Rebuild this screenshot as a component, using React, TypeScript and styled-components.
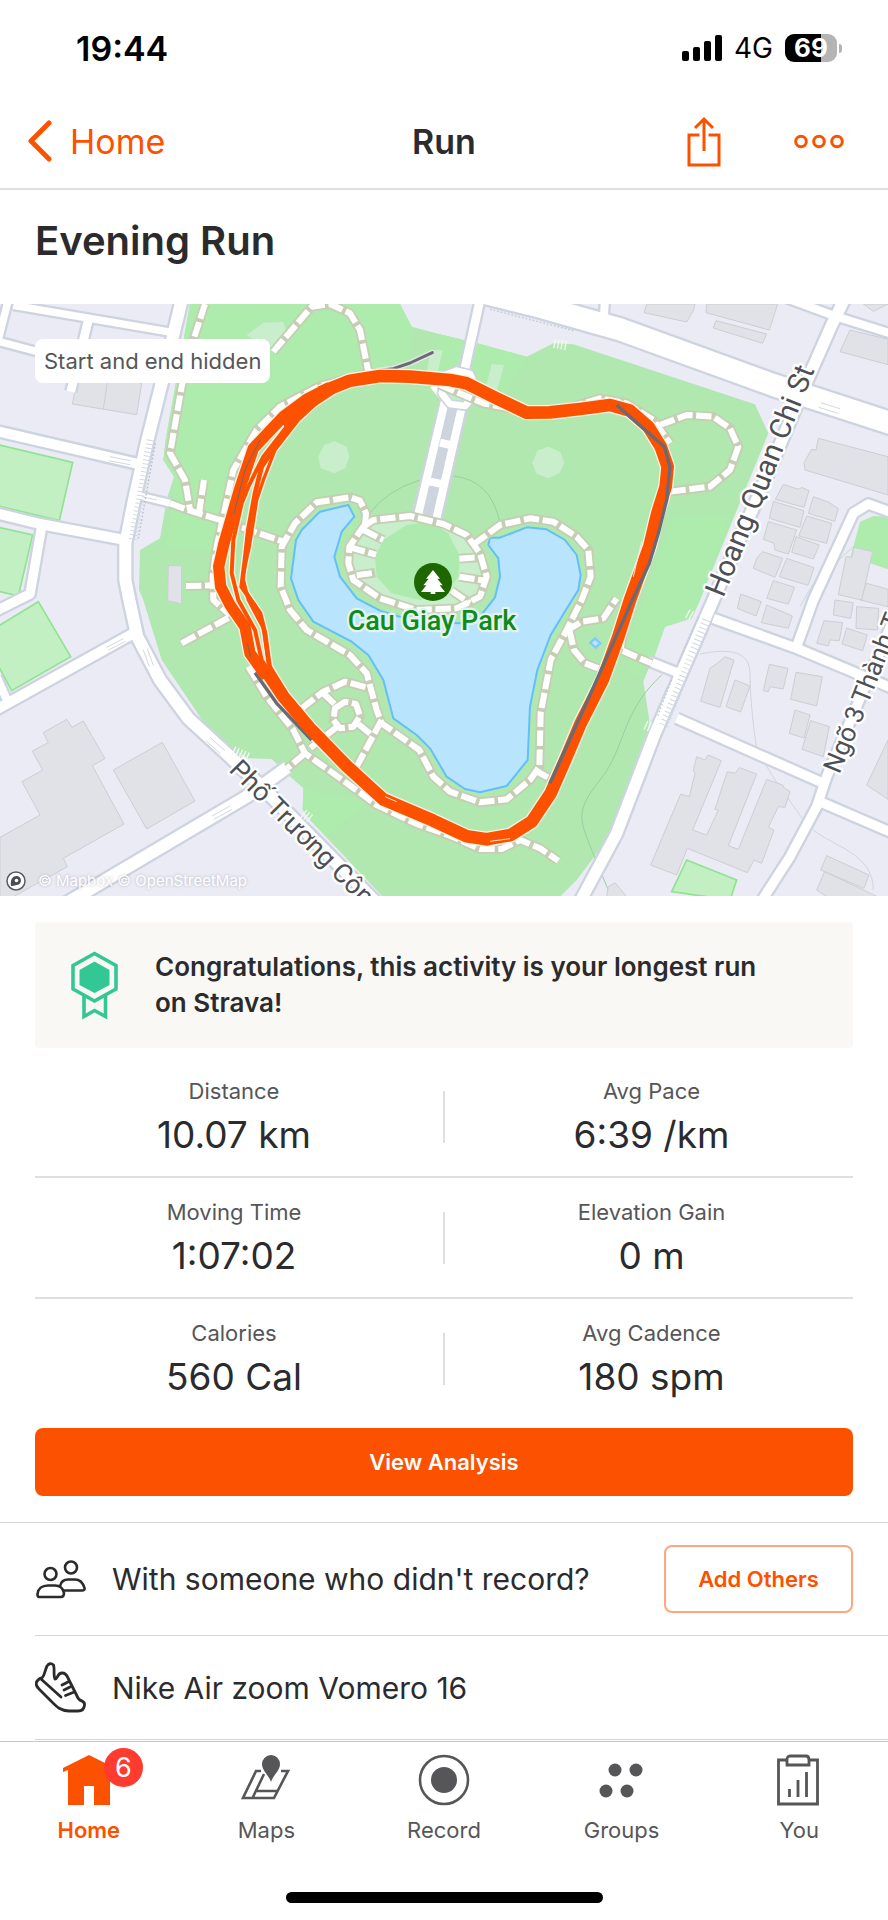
import React from "react";
import styled, { createGlobalStyle } from "styled-components";

const GlobalStyle = createGlobalStyle`
  * { box-sizing: border-box; }
  body { margin: 0; background: #fff; }
  button { font: inherit; cursor: pointer; }
  h1, h2, p, dl, dt, dd { margin: 0; font-weight: inherit; }
`;

const ORANGE = "#fc5200";
const INK = "#2b2b2d";
const SLATE = "#565658";
const RULE = "#dfdfe3";

const Screen = styled.div`
  min-height: 100vh;
  display: flex;
  flex-direction: column;
  background: #fff;
  color: ${INK};
  font-family: Inter, "Liberation Sans", sans-serif;
`;

const StatusBar = styled.div`
  display: flex;
  align-items: center;
  justify-content: space-between;
  height: 96px;
  padding: 0 46px 0 76px;
  color: #000;
`;

const Clock = styled.time`
  font-size: 34px;
  font-weight: 600;
`;

const StatusGroup = styled.div`
  display: flex;
  align-items: center;
  gap: 12px;
  font-size: 28px;
`;

const Battery = styled.div`
  display: flex;
  align-items: center;
  gap: 2px;
  &::after {
    content: "";
    width: 3px;
    height: 9px;
    border-radius: 0 3px 3px 0;
    background: #b4b4b4;
  }
`;

const BatteryLevel = styled.span`
  width: 52px;
  height: 28px;
  border-radius: 9px;
  background: linear-gradient(90deg, #000 69%, #b4b4b4 69%);
  color: #fff;
  font-size: 26px;
  font-weight: 700;
  line-height: 28px;
  text-align: center;
`;

const NavBar = styled.header`
  display: grid;
  grid-template-columns: 1fr auto 1fr;
  align-items: center;
  height: 94px;
  padding-bottom: 2px;
  border-bottom: 2px solid ${RULE};
  font-size: 34px;
`;

const BackLink = styled.a`
  display: flex;
  align-items: center;
  gap: 16px;
  padding-left: 28px;
  color: ${ORANGE};
  text-decoration: none;
`;

const NavTitle = styled.h2`
  font-size: 34px;
  font-weight: 600;
`;

const NavActions = styled.div`
  display: flex;
  align-items: center;
  justify-content: flex-end;
  gap: 72px;
  padding-right: 43px;
`;

const IconButton = styled.button`
  display: flex;
  padding: 0;
  border: 0;
  background: none;
  color: ${ORANGE};
`;

const ActivityTitle = styled.h1`
  padding: 26px 35px 38px;
  font-size: 40px;
  line-height: 50px;
  font-weight: 600;
`;

const MapFrame = styled.section`
  position: relative;
`;

const MapDrawing = styled.svg`
  display: block;
  width: 100%;
  height: auto;
`;

const HiddenBadge = styled.span`
  position: absolute;
  top: 35px;
  left: 35px;
  padding: 0 9px;
  border-radius: 8px;
  background: #fff;
  color: ${SLATE};
  font-size: 22px;
  line-height: 44px;
`;

const Attribution = styled.span`
  position: absolute;
  left: 6px;
  bottom: 4px;
  display: flex;
  align-items: center;
  gap: 12px;
  color: #fff;
  font-size: 15px;
  line-height: 22px;
  text-shadow: 0 0 3px rgba(90, 90, 110, 0.4);
`;

const Main = styled.main`
  padding: 26px 35px;
`;

const Congrats = styled.section`
  display: flex;
  align-items: center;
  gap: 36px;
  min-height: 126px;
  margin-bottom: 9px;
  padding: 0 72px 0 36px;
  border-radius: 4px;
  background: #f9f8f4;
  font-size: 26px;
  line-height: 36px;
  font-weight: 600;
`;

const StatRow = styled.dl`
  display: grid;
  grid-template-columns: 1fr 2px 1fr;
  height: 121px;
  border-bottom: 2px solid ${RULE};
  text-align: center;
  &:last-of-type { border-bottom-color: transparent; }
`;

const StatDivider = styled.span`
  height: 52px;
  margin-top: 34px;
  background: #dfdfdf;
`;

const StatLabel = styled.dt`
  color: ${SLATE};
  font-size: 22px;
  line-height: 34px;
`;

const StatValue = styled.dd`
  font-size: 37px;
  line-height: 54px;
`;

const StatCell = styled.div`
  padding-top: 17px;
  &:first-child { padding-right: 10px; }
  &:last-child { padding-left: 5px; }
`;

const PrimaryButton = styled.button`
  display: block;
  width: 100%;
  height: 68px;
  margin-top: 8px;
  border: 0;
  border-radius: 8px;
  background: ${ORANGE};
  color: #fff;
  font-size: 22px;
  font-weight: 600;
`;

const DetailList = styled.section`
  padding-bottom: 1px;
  border-top: 1px solid #d6d6d9;
`;

const DetailRow = styled.div<{ $height: number }>`
  display: flex;
  align-items: center;
  gap: 26px;
  height: ${(p) => p.$height}px;
  margin-left: 35px;
  padding-right: 35px;
  border-bottom: 1px solid #d6d6d9;
`;

const DetailText = styled.p`
  flex: 1;
  font-size: 30px;
`;

const OutlineButton = styled.button`
  width: 189px;
  height: 68px;
  border: 2px solid #ffa580;
  border-radius: 8px;
  background: #fff;
  color: ${ORANGE};
  font-size: 22px;
  font-weight: 600;
`;

const TabBar = styled.nav`
  display: grid;
  grid-template-columns: repeat(5, 1fr);
  border-top: 1px solid #c6c6c8;
  padding-top: 12px;
`;

const Tab = styled.a<{ $active?: boolean }>`
  display: flex;
  flex-direction: column;
  align-items: center;
  gap: 9px;
  color: ${(p) => (p.$active ? ORANGE : SLATE)};
  font-size: 22px;
  line-height: 30px;
  font-weight: ${(p) => (p.$active ? 600 : 400)};
  text-decoration: none;
`;

const TabIcon = styled.span`
  position: relative;
  display: flex;
`;

const Badge = styled.span`
  position: absolute;
  top: -6px;
  left: 41px;
  width: 39px;
  height: 39px;
  border-radius: 50%;
  background: #ff3b30;
  color: #fff;
  font-size: 27px;
  font-weight: 400;
  line-height: 39px;
  text-align: center;
`;

const HomeIndicator = styled.div`
  width: 317px;
  height: 11px;
  margin: auto auto 17px;
  border-radius: 6px;
  background: #000;
`;

const roads: { d: string; w: number }[] = [
  { d: "M25 0L-8 130", w: 22 },
  { d: "M40 16L520 98", w: 22 },
  { d: "M0 125L130 160", w: 22 },
  { d: "M265 60L212 275", w: 26 },
  { d: "M-10 393L415 492", w: 30 },
  { d: "M-10 640L120 672L385 722", w: 30 },
  { d: "M125 680L90 882L-10 932", w: 28 },
  { d: "M-10 1130L25 1210", w: 24 },
  { d: "M-10 1228L400 1000", w: 30 },
  { d: "M190 1815L740 1490L862 1402", w: 36 },
  { d: "M420 588L510 610", w: 20 },
  { d: "M1942 1082L2050 1125", w: 26 },
  { d: "M1815 -10L1812 50", w: 24 },
  { d: "M1440 0L1388 235", w: 26 },
  { d: "M545 0L485 250L440 430L402 600L376 730L376 840L388 900L412 1010L480 1140L565 1255L690 1370L800 1475L1130 1810", w: 36 },
  { d: "M1420 -30L1620 20L1860 88L2320 255L2680 372", w: 66 },
  { d: "M2360 -5L2510 50L2680 103", w: 24 },
  { d: "M2532 0L2495 75L2400 290L2300 530L2140 900L1965 1300L1850 1600L1740 1805", w: 34 },
  { d: "M2680 640L2605 612L2560 640L2440 900L2390 1040", w: 28 },
  { d: "M2140 955L2390 1045L2680 1166", w: 28 },
  { d: "M2030 1255L2470 1450", w: 28 },
  { d: "M2680 960L2480 1430L2450 1520L2370 1670L2280 1810", w: 28 },
  { d: "M2460 1505L2680 1600", w: 28 },
];

const buildings = [
  "M238 205L425 250L410 344L217 312Z",
  "M0 1612L120 1545L66 1445L128 1410L97 1353L145 1328L130 1298L200 1258L216 1282L250 1263L315 1376L277 1397L372 1572L190 1675L202 1700L40 1790L0 1790Z",
  "M340 1410L487 1327L585 1503L440 1587Z",
  "M505 797L545 797L545 912L503 902Z",
  "M1940 12L2085 12L2080 32L2060 66L1932 38Z",
  "M2120 12L2333 12L2308 90L2118 38Z",
  "M2148 62L2300 102L2288 130L2140 84Z",
  "M2590 12L2620 34L2664 12Z",
  "M2550 90L2664 118L2664 194L2520 155Z",
  "M2455 415L2664 470L2664 585L2415 510L2412 488L2435 448L2448 450Z",
  "M2350 553L2395 568L2405 562L2427 572L2412 622L2326 598Z",
  "M2320 604L2412 632L2400 682L2308 655Z",
  "M2305 665L2390 690L2365 762L2325 750L2322 730L2290 718Z",
  "M2440 590L2485 606L2515 626L2504 664L2425 640Z",
  "M2420 648L2495 670L2480 730L2396 708Z",
  "M2388 710L2458 735L2440 777L2375 757Z",
  "M2288 755L2348 775L2325 832L2260 805L2270 775Z",
  "M2360 775L2442 803L2424 856L2338 830Z",
  "M2320 842L2384 862L2365 912L2300 895Z",
  "M2600 850L2664 868L2664 920L2580 900Z",
  "M2222 882L2284 905L2268 948L2212 925Z",
  "M2300 915L2377 948L2365 985L2284 968Z",
  "M2505 900L2560 908L2552 955L2500 945Z",
  "M2570 920L2636 925L2632 990L2568 985Z",
  "M2472 962L2528 968L2518 1022L2490 1020L2485 1038L2450 1030Z",
  "M2540 984L2602 1005L2588 1052L2526 1032Z",
  "M2152 1090L2175 1070L2202 1080L2160 1222L2102 1204L2130 1105Z",
  "M2205 1140L2250 1158L2222 1236L2178 1220Z",
  "M2308 1093L2364 1105L2350 1167L2310 1160L2305 1175L2290 1172Z",
  "M2388 1117L2467 1130L2450 1218L2372 1198Z",
  "M2385 1230L2430 1245L2412 1314L2368 1300Z",
  "M2432 1262L2488 1280L2470 1370L2406 1348Z",
  "M2080 1410L2090 1370L2115 1380L2125 1365L2164 1382L2078 1590L2120 1605L2155 1530L2145 1528L2170 1450L2182 1415L2205 1420L2218 1403L2270 1422L2185 1637L2215 1648L2300 1438L2348 1455L2350 1462L2370 1475L2355 1522L2335 1520L2305 1582L2322 1590L2285 1690L2262 1680L2242 1718L2062 1645L2030 1725L1952 1695L2042 1482L2068 1490L2085 1420Z",
  "M2480 1667L2607 1725L2592 1765L2462 1710Z",
  "M2474 1715L2632 1790L2480 1790L2450 1770Z",
  "M2664 1320L2600 1455L2664 1498Z",
  "M1845 1748L1880 1790L1820 1790L1825 1760Z",
];

const paths = [
  "M615 12L580 120L545 260L510 460L555 540L570 630",
  "M612 540L597 640",
  "M510 610L570 632L660 660L850 725",
  "M820 155L935 20L990 12L1050 40L1080 90L1105 215",
  "M1120 215L960 258L840 320L770 390L700 510L672 640L650 740L638 830L640 900L690 945",
  "M558 858L640 856",
  "M545 1030L695 948",
  "M1095 675L1098 640L1080 602L1050 592L950 607L885 670L845 740L842 860L870 930L920 990L1050 1065L1100 1120L1130 1230L1145 1270L1258 1350L1300 1430L1350 1475L1440 1507L1520 1498L1590 1440L1618 1400L1622 1240L1652 1080L1700 990L1745 900L1772 830L1765 750L1730 710L1660 665L1590 655L1500 675L1425 730",
  "M1090 680L1120 660L1230 648L1330 672L1400 705L1440 760L1460 830L1440 890L1370 925L1250 930L1140 895L1060 840L1045 790L1048 740Z",
  "M1090 690L1150 720", "M1050 742L1128 764", "M1070 826L1125 818",
  "M1378 776L1435 772", "M1378 830L1455 842", "M1355 872L1410 910",
  "M905 1225L970 1175L1035 1145L1110 1165", "M970 1180L1012 1220",
  "M1075 1272L1115 1305", "M1012 1280L930 1345", "M1145 1260L1070 1400",
  "M1005 1225L1035 1205L1068 1212L1080 1248L1060 1280L1020 1285L1000 1260Z",
  "M745 1100L800 1190L880 1290L915 1360L1000 1420L1130 1515L1250 1572L1350 1607L1440 1647L1505 1647L1560 1620L1620 1645L1675 1682",
  "M915 1360L862 1405",
  "M1320 255L1450 310L1580 335L1700 325L1800 295L1880 310L1960 360L2010 430",
  "M1980 375L2060 345L2140 350L2190 385L2215 440L2190 510L2130 560L2010 575",
  "M1700 992L1745 965L1810 955L1850 895",
  "M1708 990L1722 1050L1755 1090L1795 1105",
  "M1868 1000L1862 1050L1955 1090",
  "M1603 1410L1655 1438",
];

const water =
  "M1045 615L1063 650L1025 695L1003 770L1020 830L1070 895L1140 932L1250 966L1380 970L1440 950L1485 892L1500 830L1495 775L1465 735L1470 713L1500 713L1580 682L1640 688L1695 720L1730 765L1742 825L1735 870L1710 910L1652 1005L1612 1110L1590 1220L1583 1380L1520 1458L1440 1477L1395 1467L1340 1430L1290 1345L1250 1305L1180 1255L1150 1140L1105 1065L1055 1025L940 965L895 900L873 835L888 720L905 690L960 635Z";

const loop =
  "M960 278L1050 242L1140 228L1230 230L1350 240L1400 250L1490 295L1580 338L1650 337L1740 327L1830 315L1890 332L1945 380L1982 440L2003 500L1997 560L1972 640L1948 740L1890 900L1855 1010L1808 1140L1742 1270L1700 1370L1652 1480L1595 1565L1532 1605L1460 1618L1400 1609L1300 1562L1150 1498L1040 1398L930 1285L850 1190L790 1100";

const laps = [
  { d: "M990 262L920 298L850 350L760 445L718 570L692 660L672 730L656 800L662 860L690 915L735 980L750 1060L800 1130", w: 34 },
  { d: "M970 280L860 380L790 470L745 560L725 610L700 720L695 820L715 900L765 990L785 1080L830 1150", w: 12 },
  { d: "M990 268L910 330L840 420L785 500L765 580L745 690L735 780L725 860L780 940L795 1000L810 1110L870 1200", w: 14 },
  { d: "M985 276L895 360L825 450L790 540L770 600L748 740L728 830L745 900L790 985L805 1090L860 1180", w: 10 },
  { d: "M1000 262L920 315L850 375", w: 36 },
];

function RouteMap() {
  return (
    <MapDrawing viewBox="0 12 2664 1776" role="img" aria-label="Route around Cau Giay Park">
      <rect y="12" width="2664" height="1776" fill="#ebebf5" />
      <path
        fill="#b0e8b0"
        d="M570 12L1200 12L1235 80L1320 103L1440 132L1580 170L1660 130L1720 133L2265 313L2305 400L2100 900L2075 955L1995 980L1930 1145L1948 1260L1945 1290L1825 1615L1730 1740L1680 1790L1148 1790L930 1560L908 1530L910 1465L865 1425L815 1377L745 1375L700 1350L610 1265L485 1080L430 900L417 870L420 750L480 715L500 600L522 530L490 480L497 420Z"
      />
      <g fill="#adecad">
        <path d="M570 12L1200 12L1235 80L1225 215L1050 240L860 330L720 520L680 740L600 750L500 740L522 530L490 480L497 420Z" />
        <path d="M2020 650L2190 640L2100 900L2075 955L1995 980L1960 1080L1890 1140L1880 1040Z" />
        <path d="M910 1465L1100 1510L980 1610L908 1530Z" />
        <path d="M1320 103L1440 132L1580 170L1500 300L1300 240Z" />
      </g>
      <g fill="#c9eecb">
        <path d="M740 105L790 68L850 66L858 90L820 155Z" />
        <path d="M955 470L972 436L1003 424L1040 440L1048 470L1036 504L1004 520L962 505Z" />
        <path d="M1597 490L1612 452L1645 440L1681 456L1693 490L1678 520L1645 535L1610 522Z" />
        <path d="M1475 192L1512 196L1490 275L1457 265Z" />
        <path d="M1292 150L1328 150L1310 230L1280 220Z" />
      </g>
      <g fill="none" stroke="#98cfa3" strokeWidth="3">
        <path d="M1105 645Q1160 570 1260 540M1360 528Q1470 540 1498 660M1985 1125C1860 1240 1880 1340 1800 1440S1740 1560 1785 1675L1825 1770" />
      </g>
      <g fill="none" stroke="#cfd6dc" strokeWidth="3">
        <path d="M2100 1062Q2250 1030 2250 1120T2270 1350L2325 1440L2410 1560M2440 1590C2500 1640 2620 1660 2620 1770M2664 722L2560 740L2440 850L2400 920" />
      </g>
      <g fill="#e1e2e7" stroke="#cdced3" strokeWidth="3">
        {buildings.map((d) => <path key={d} d={d} />)}
        <path d="M325 225L310 328" />
      </g>
      <g fill="#c2f0c2" stroke="#90e392" strokeWidth="5">
        <path d="M-5 434L218 487L178 662L-5 618Z" />
        <path d="M-5 682L98 705L55 888L-5 874Z" />
        <path d="M-5 978L115 905L212 1070L35 1172L-5 1098Z" />
        <path d="M2060 1680L2210 1740L2190 1800L2015 1775Z" />
      </g>
      <path fill="#adecad" d="M2664 650L2620 648L2580 665L2552 770L2664 808Z" />
      <path d="M2562 742L2618 755L2585 900L2515 884L2538 770L2555 772Z" fill="#e1e2e7" stroke="#cdced3" strokeWidth="3" />

      <g fill="none" stroke="#cdd4df" strokeLinejoin="round">
        {roads.map((r) => <path key={r.d} d={r.d} strokeWidth={r.w + 14} />)}
      </g>
      <g fill="none" stroke="#fff" strokeLinejoin="round">
        {roads.map((r) => <path key={r.d} d={r.d} strokeWidth={r.w} />)}
      </g>
      <g fill="none" stroke="#d3d8e4" strokeWidth="3">
        <path d="M330 470L392 482M326 482L390 494M425 590L470 600M425 602L470 612M320 1042L370 1016M326 1050L376 1024M636 1548L690 1518M642 1558L696 1528M618 1322L662 1362M630 1312L674 1352M430 1050L448 1100M442 1046L460 1096M2462 308L2520 326M2456 322L2514 340" />
        <path d="M452 420L398 720" strokeWidth="24" strokeDasharray="3 9" />
        <path d="M2120 960L1990 1280" strokeWidth="28" strokeDasharray="3 10" />
        <path d="M466 430L415 715" stroke="#b9bdcb" strokeWidth="4" strokeDasharray="5 6" />
        <path d="M2095 950L2035 1090M2015 1140L1972 1250M1470 28L1720 92" stroke="#c3c8d3" strokeWidth="4" strokeDasharray="5 6" />
      </g>
      <g fill="none" stroke="#f4f8f4" strokeWidth="28" strokeDasharray="4 7">
        <path d="M700 1352L745 1372M910 1540L935 1560M1662 130L1705 138M2062 940L2080 950M1936 1275L1952 1282" />
      </g>

      <g fill="none" strokeLinejoin="round">
        <path d="M1338 300L1252 655M1385 320L1306 670" stroke="#cdd4dd" strokeWidth="40" />
        <path d="M1360 300L1280 660" stroke="#cdd4dd" strokeWidth="30" />
        <path d="M1338 290L1252 655M1388 310L1306 670M1320 428L1365 438M1290 545L1335 554M1300 255L1345 310L1395 318L1425 290" stroke="#fff" strokeWidth="24" />
        <path d="M1335 225L1370 212L1410 222L1432 275L1395 318L1350 312L1325 280Z" fill="#c3eec5" stroke="#cdd4dd" strokeWidth="30" />
        <path d="M1335 225L1370 212L1410 222L1432 275L1395 318L1350 312L1325 280Z" stroke="#fff" strokeWidth="20" />
      </g>

      <path d={water} fill="#b8e4fe" stroke="#62bffb" strokeWidth="6" strokeLinejoin="round" />
      <path fill="#c9eecb" d="M1090 680L1120 660L1230 648L1330 672L1400 705L1440 760L1460 830L1440 890L1370 925L1250 930L1140 895L1060 840L1045 790L1048 740Z" />
      <path fill="#adeaad" d="M1125 770L1150 720L1220 675L1290 665L1345 700L1380 770L1375 830L1340 880L1260 900L1175 880L1130 830Z" />
      <path fill="#80c9fa" d="M1785 1010L1806 1030L1787 1048L1766 1028Z" />
      <path fill="#b8e4fe" d="M1785 1020L1796 1030L1786 1038L1776 1029Z" />

      <g fill="none" stroke="#c5ceb4" strokeWidth="29" strokeLinejoin="round">
        {paths.map((d) => <path key={d} d={d} />)}
      </g>
      <g fill="none" stroke="#fff" strokeWidth="18" strokeDasharray="46 11" strokeLinejoin="round">
        {paths.map((d) => <path key={d} d={d} />)}
      </g>

      <g fill="none" strokeLinejoin="round">
        <path d="M1130 212L1180 206L1230 189L1300 157" stroke="#dfe7e2" strokeWidth="18" />
        <path d="M1130 212L1180 206L1230 189L1297 158" stroke="#6c6975" strokeWidth="9" strokeLinecap="round" />
        <g stroke="#f6f2e4">
          <path d={loop} strokeWidth="46" />
          {laps.map((l) => <path key={l.d} d={l.d} strokeWidth={l.w + 8} />)}
        </g>
        <path d="M765 1118L830 1210L935 1320" stroke="#6c6975" strokeWidth="10" />
        <g stroke={ORANGE}>
          {laps.map((l) => <path key={l.d} d={l.d} strokeWidth={l.w} />)}
          <path d={loop} strokeWidth="38" />
        </g>
        <path d="M780 420L735 510L702 640M742 1030L752 1070" stroke="#6c6975" strokeWidth="3" />
        <path d="M1850 315L1993 440L2010 500L2000 600L1975 700L1948 790L1897 900L1770 1185L1650 1450" stroke="#6c6975" strokeWidth="10" />
        <path d="M1925 725L1900 830M1155 1490L1190 1505M1470 1624L1530 1616" stroke="#ffe5d6" strokeWidth="3" />
      </g>

      <circle cx="1299" cy="846" r="57" fill="#1e6600" />
      <path fill="#fff" d="M1299 810L1320 836H1312L1328 856H1319L1335 876H1306V882H1292V876H1263L1279 856H1270L1286 836H1278Z" />
      <g fontFamily='Roboto, "Noto Sans", sans-serif' fill="#4e4f55" stroke="#fff" strokeWidth="14" strokeLinejoin="round" paintOrder="stroke">
        <text x="1296" y="990" textAnchor="middle" fontSize="81" fontWeight="500" fill="#108a1e" stroke="#e2f5ec">Cau Giay Park</text>
        <path id="hoang" d="M2170 895L2300 575L2450 195" fill="none" stroke="none" />
        <path id="ngo" d="M2518 1424L2580 1275L2720 920" fill="none" stroke="none" />
        <path id="pho" d="M684 1412L1160 1892" fill="none" stroke="none" />
        <text fontSize="88"><textPath href="#hoang">Hoang Quan Chi St</textPath></text>
        <text fontSize="78"><textPath href="#ngo">Ngõ 3 Thành T</textPath></text>
        <text fontSize="80"><textPath href="#pho">Phố Trương Côn</textPath></text>
      </g>
    </MapDrawing>
  );
}

const ChevronIcon = () => (
  <svg width="26" height="42" viewBox="0 0 26 42" fill="none" stroke="currentColor" strokeWidth="5" strokeLinecap="round" strokeLinejoin="round">
    <path d="M21 3L3 21L21 39" />
  </svg>
);

const ShareIcon = () => (
  <svg width="34" height="51" viewBox="0 0 34 51" fill="none" stroke="currentColor" strokeWidth="3">
    <path d="M12.500 19H2V49H32V19H21.500M17 35V3M8 12L17 3L26 12" />
  </svg>
);

const MoreIcon = () => (
  <svg width="52" height="15" viewBox="0 0 52 15" fill="none" stroke="currentColor" strokeWidth="3">
    <circle cx="8" cy="7.500" r="5.300" /><circle cx="26" cy="7.500" r="5.300" /><circle cx="44" cy="7.500" r="5.300" />
  </svg>
);

const SignalIcon = () => (
  <svg width="40" height="26" viewBox="0 0 40 26" fill="#000">
    <rect y="16" width="7" height="10" rx="2" /><rect x="11" y="12" width="7" height="14" rx="2" />
    <rect x="22" y="6" width="7" height="20" rx="2" /><rect x="33" width="7" height="26" rx="2" />
  </svg>
);

const MedalSvg = styled.svg`
  flex: none;
`;

const MedalIcon = () => (
  <MedalSvg width="48" height="69" viewBox="0 0 48 69" fill="none" stroke="#34c796" strokeWidth="3.600">
    <path d="M23.500 2.500L45 14.500V38L23.500 50L2 38V14.500Z" />
    <path d="M23.500 10.500L38.500 19V34L23.500 42L8.500 34V19Z" fill="#34c796" stroke="none" />
    <path d="M13 45V65.500L23.500 59.500L34.500 65.500V45" />
  </MedalSvg>
);

const PeopleIcon = () => (
  <svg width="51" height="40" viewBox="0 0 51 40" fill="none" stroke={INK} strokeWidth="2.600" strokeLinejoin="round">
    <circle cx="15.500" cy="15" r="6" /><circle cx="36" cy="8.500" r="6" />
    <path d="M4 38H26Q29 38 29 34C28 29 25 26.500 20 26.500H13C7 26.500 3 30 2.500 35Q2.500 38 4 38Z" />
    <path d="M25 27C26 23 29 20.500 33 20.500H40C45 20.500 48 24 49.500 29Q50 31.500 47 31.500H28" />
  </svg>
);

const ShoeIcon = () => (
  <svg width="51" height="51" viewBox="0 0 51 51" fill="none" stroke={INK} strokeWidth="2.800" strokeLinecap="round" strokeLinejoin="round">
    <path d="M7 16C10 13 10 8 12 4Q15 0 18.500 3C20 8 18 13 20 17C23 17 22 11 27 11Q31 11 33 16L43 36C45 40 50 38 49.500 43Q49 49 43 49H34C25 49 21 44 15 38L4 27Q-1 22 3 18Q5 16 7 16Z" />
    <path d="M6 17L26 35M27 23L33 20M29 28L35 25M30.500 33.500L38 30.500" />
  </svg>
);

const HomeIcon = () => (
  <svg width="52" height="52" viewBox="0 0 52 52" fill="currentColor">
    <path d="M26 1L52 14V18L47 16V51H31V32H21V51H5V16L0 18V14Z" />
  </svg>
);

const MapsIcon = () => (
  <svg width="52" height="52" viewBox="0 0 52 52" fill="none" stroke="currentColor" strokeWidth="2.600">
    <path d="M21 17H16L3 44H34L48 17H41M24 20L13 43M17 37H37" />
    <path d="M31 28C29 21 22 17 22 10A9 9 0 0 1 40 10C40 17 33 21 31 28Z" fill="currentColor" stroke="none" />
  </svg>
);

const RecordIcon = () => (
  <svg width="52" height="52" viewBox="0 0 52 52" fill="none" stroke="currentColor" strokeWidth="2.600">
    <circle cx="26" cy="26" r="24" /><circle cx="26" cy="26" r="13" fill="currentColor" stroke="none" />
  </svg>
);

const GroupsIcon = () => (
  <svg width="52" height="52" viewBox="0 0 52 52" fill="currentColor">
    <circle cx="19" cy="16" r="6.500" /><circle cx="40" cy="16" r="6.500" />
    <circle cx="10" cy="37" r="6.500" /><circle cx="31" cy="37" r="6.500" />
  </svg>
);

const YouIcon = () => (
  <svg width="52" height="52" viewBox="0 0 52 52" fill="none" stroke="currentColor" strokeWidth="2.800">
    <path d="M15 6H5.500V50H44.500V6H36M14 11V6Q14 2 17 2H33Q36 2 36 6V11ZM16.500 43V35M25 43V26M33.500 43V18" />
  </svg>
);

const stats = [
  [["Distance", "10.07 km"], ["Avg Pace", "6:39 /km"]],
  [["Moving Time", "1:07:02"], ["Elevation Gain", "0 m"]],
  [["Calories", "560 Cal"], ["Avg Cadence", "180 spm"]],
];

export default function App() {
  return (
    <Screen>
      <GlobalStyle />
      <StatusBar>
        <Clock>19:44</Clock>
        <StatusGroup>
          <SignalIcon />
          <span>4G</span>
          <Battery><BatteryLevel>69</BatteryLevel></Battery>
        </StatusGroup>
      </StatusBar>
      <NavBar>
        <BackLink href="#home"><ChevronIcon />Home</BackLink>
        <NavTitle>Run</NavTitle>
        <NavActions>
          <IconButton aria-label="Share"><ShareIcon /></IconButton>
          <IconButton aria-label="More"><MoreIcon /></IconButton>
        </NavActions>
      </NavBar>
      <ActivityTitle>Evening Run</ActivityTitle>
      <MapFrame>
        <RouteMap />
        <HiddenBadge>Start and end hidden</HiddenBadge>
        <Attribution>
          <svg width="20" height="20" viewBox="0 0 20 20">
            <circle cx="10" cy="10" r="9" fill="#fff" stroke="#5a5a62" strokeWidth="1.500" />
            <path d="M5 15C4 8 7 5 10.500 5A4.500 4.500 0 0 1 10.500 14Q8 15 5 15Z" fill="#4c4c54" />
            <circle cx="10.500" cy="9.500" r="1.800" fill="#fff" />
          </svg>
          <span>© Mapbox © OpenStreetMap</span>
        </Attribution>
      </MapFrame>
      <Main>
        <Congrats>
          <MedalIcon />
          <p>Congratulations, this activity is your longest run on Strava!</p>
        </Congrats>
        {stats.map(([left, right]) => (
          <StatRow key={left[0]}>
            <StatCell><StatLabel>{left[0]}</StatLabel><StatValue>{left[1]}</StatValue></StatCell>
            <StatDivider />
            <StatCell><StatLabel>{right[0]}</StatLabel><StatValue>{right[1]}</StatValue></StatCell>
          </StatRow>
        ))}
        <PrimaryButton>View Analysis</PrimaryButton>
      </Main>
      <DetailList>
        <DetailRow $height={113}>
          <PeopleIcon />
          <DetailText>With someone who didn't record?</DetailText>
          <OutlineButton>Add Others</OutlineButton>
        </DetailRow>
        <DetailRow $height={104}>
          <ShoeIcon />
          <DetailText>Nike Air zoom Vomero 16</DetailText>
        </DetailRow>
      </DetailList>
      <TabBar>
        <Tab href="#home" $active aria-current="page"><TabIcon><HomeIcon /><Badge>6</Badge></TabIcon>Home</Tab>
        <Tab href="#maps"><TabIcon><MapsIcon /></TabIcon>Maps</Tab>
        <Tab href="#record"><TabIcon><RecordIcon /></TabIcon>Record</Tab>
        <Tab href="#groups"><TabIcon><GroupsIcon /></TabIcon>Groups</Tab>
        <Tab href="#you"><TabIcon><YouIcon /></TabIcon>You</Tab>
      </TabBar>
      <HomeIndicator />
    </Screen>
  );
}
